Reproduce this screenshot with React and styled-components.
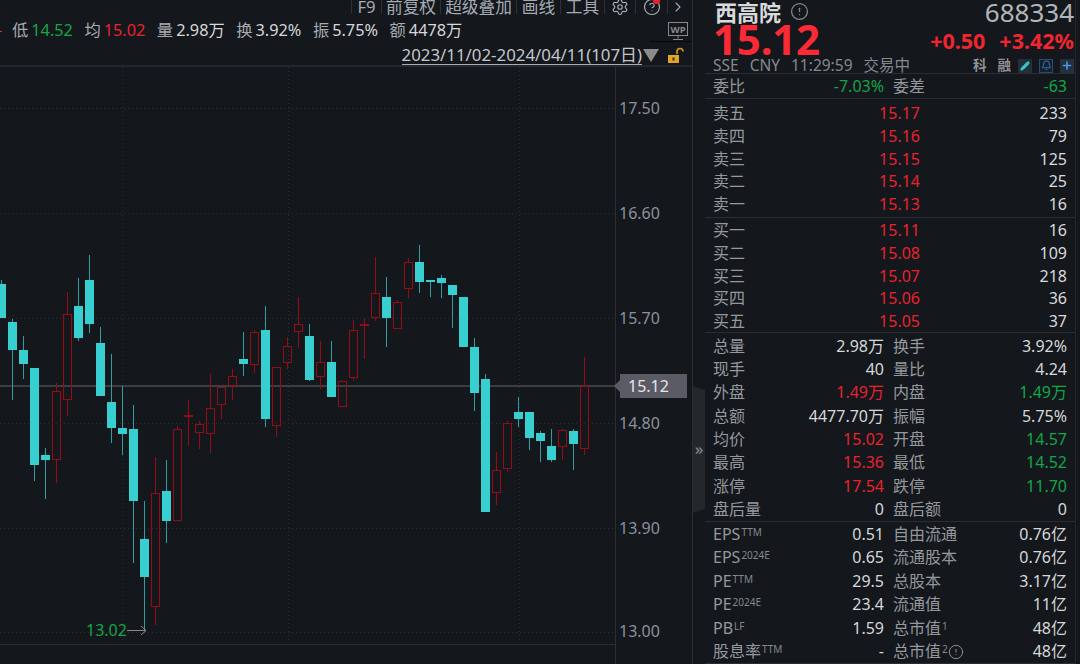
import React from 'react'
import styled, { createGlobalStyle } from 'styled-components'
import { Bell, ChevronRight, CircleAlert, CircleHelp, Pencil, Plus, Settings } from 'lucide-react'

const GlobalStyle = createGlobalStyle`
  html, body {
    margin: 0;
    padding: 0;
    background: #14171c;
  }
  body {
    font-family: "Noto Sans", "Noto Sans CJK SC", sans-serif;
    overflow: hidden;
  }
`

const RED = '#e9222e'
const GREEN = '#12a648'
const tone = (c) => (c === 'red' ? RED : c === 'green' ? GREEN : '#d5d7d9')

const Page = styled.div`
  display: flex;
  width: 1080px;
  height: 664px;
  overflow: hidden;
  background: #14171c;
`

const ChartColumn = styled.div`
  display: flex;
  flex-direction: column;
  width: 692px;
  flex: none;
  border-right: 1px solid #2a2d32;
`

const TopBar = styled.div`
  height: 67px;
  flex: none;
  box-sizing: border-box;
  border-bottom: 2px solid #23262c;
  display: flex;
  flex-direction: column;
  align-items: flex-end;
`

const Toolbar = styled.div`
  display: flex;
  height: 14px;
  align-items: center;
  padding-right: 4px;
`

const ToolItem = styled.div`
  display: flex;
  align-items: center;
  justify-content: center;
  width: ${(p) => p.$w}px;
  height: 14px;
  border-left: 1px solid #2c2f34;
  color: #a4abb3;
  font-size: 16.7px;
  line-height: 14px;
  position: relative;
  box-sizing: border-box;
`

const RedDot = styled.span`
  position: absolute;
  top: -3px;
  right: 7px;
  width: 7px;
  height: 7px;
  border-radius: 50%;
  background: #e9222e;
`

const StatsRow = styled.div`
  align-self: stretch;
  display: flex;
  align-items: center;
  height: 31px;
  padding-left: 12px;
  gap: 11.5px;
  position: relative;
`

const ClippedMark = styled.span`
  position: absolute;
  left: 0;
  top: 17px;
  width: 2px;
  height: 1px;
  background: #e9222e;
`

const Stat = styled.div`
  display: flex;
  align-items: center;
  gap: 3px;
  font-size: 16.3px;
  line-height: 22px;
  color: #a8acb1;
  white-space: nowrap;
`

const StatValue = styled.span`
  color: ${(p) => tone(p.$c)};
`

const WpBadge = styled.div`
  position: absolute;
  right: 0;
  top: 8px;
  height: 20px;
  width: 42px;
  box-sizing: border-box;
  padding-right: 4px;
  border-bottom: 1px solid #07080a;
  display: flex;
  justify-content: flex-end;
`

const DateRow = styled.div`
  display: flex;
  align-items: center;
  height: 20px;
  padding-right: 7px;
  gap: 1px;
`

const DateText = styled.span`
  font-size: 16.85px;
  line-height: 18px;
  color: #c3c6ca;
  border-bottom: 1px solid #a9adb2;
  white-space: nowrap;
`

const Triangle = styled.span`
  width: 0;
  height: 0;
  border-left: 8.5px solid transparent;
  border-right: 8.5px solid transparent;
  border-top: 13px solid #8c8c8c;
  margin-right: 7px;
`

const ChartArea = styled.div`
  position: relative;
  flex: 1;
  min-height: 0;
`

const ChartSvg = styled.svg`
  display: block;
  width: 691px;
  height: 597px;
`

const AxisText = styled.text`
  fill: #8a929c;
  font-size: 16px;
  font-family: "Noto Sans", sans-serif;
`

const LowText = styled.text`
  fill: ${GREEN};
  font-size: 16px;
  font-family: "Noto Sans", sans-serif;
`

const PriceTag = styled.div`
  position: absolute;
  left: 620px;
  top: 307px;
  width: 67px;
  height: 24px;
  box-sizing: border-box;
  padding-left: 8px;
  background: #5b5b66;
  color: #e4e6e8;
  font-size: 16px;
  line-height: 24px;
  &::before {
    content: '';
    position: absolute;
    left: -6px;
    top: 6px;
    border-top: 6px solid transparent;
    border-bottom: 6px solid transparent;
    border-right: 6px solid #5b5b66;
  }
`

const CollapseHandle = styled.div`
  position: absolute;
  left: 693px;
  top: 386px;
  width: 12px;
  height: 127px;
  background: #24272c;
  clip-path: polygon(0 0, 100% 4px, 100% 123px, 0 100%);
  color: #8d9196;
  font-size: 17px;
  line-height: 125px;
  text-align: center;
`

const Side = styled.div`
  flex: 1;
  min-width: 0;
  box-sizing: border-box;
  padding-left: 12px;
  padding-right: 4px;
  display: flex;
  flex-direction: column;
`

const SideInner = styled.div`
  border-right: 1px solid #24272c;
  height: 664px;
`

const Header = styled.div`
  height: 74px;
  box-sizing: border-box;
  padding: 0 1px 0 8px;
  border-bottom: 1px solid #2a2d32;
`

const HeadRow = styled.div`
  display: flex;
  align-items: center;
  justify-content: space-between;
  height: ${(p) => p.$h}px;
`

const Title = styled.div`
  display: flex;
  align-items: center;
  gap: 9px;
  padding-left: 2px;
  color: #d9dadb;
  font-size: 22px;
  font-weight: 700;
  line-height: 22px;
`

const Code = styled.div`
  color: #b3b6b9;
  font-size: 26px;
  line-height: 24px;
`

const BigPrice = styled.div`
  color: #fa2a36;
  font-size: 42px;
  font-weight: 700;
  line-height: 30px;
  letter-spacing: -0.2px;
  padding-bottom: 3px;
`

const Changes = styled.div`
  display: flex;
  gap: 14px;
  color: #f0262f;
  font-size: 21.5px;
  font-weight: 700;
  line-height: 26px;
`

const SubInfo = styled.div`
  display: flex;
  gap: 11px;
  color: #848a90;
  font-size: 15.5px;
  line-height: 15px;
  white-space: nowrap;
`

const Badges = styled.div`
  display: flex;
  align-items: center;
  gap: 7px;
  color: #8f9398;
  font-size: 13.5px;
  line-height: 15px;
  font-weight: 700;
`

const BadgeLabel = styled.span`
  margin-right: ${(p) => p.$gap || 0}px;
`

const BadgeBox = styled.span`
  display: flex;
  align-items: center;
  justify-content: center;
  width: 14px;
  height: 14px;
  background: ${(p) => p.$bg};
  border: 1px solid ${(p) => p.$line};
  box-sizing: border-box;
  color: ${(p) => p.$fg};
`

const Section = styled.div`
  box-sizing: border-box;
  height: ${(p) => p.$h}px;
  padding: ${(p) => p.$pad || 0}px 8px 0;
  border-bottom: 1px solid #2a2d32;
`

const PairRow = styled.div`
  display: grid;
  grid-template-columns: 171px 174px;
  column-gap: 9px;
  height: ${(p) => p.$h}px;
  line-height: ${(p) => p.$h}px;
  font-size: 16px;
`

const Cell = styled.div`
  display: flex;
  justify-content: space-between;
  white-space: nowrap;
`

const Label = styled.span`
  display: flex;
  align-items: center;
  color: #94999e;
`

const Value = styled.span`
  color: ${(p) => tone(p.$c)};
`

const Small = styled.sup`
  font-size: 10px;
  line-height: 10px;
  color: #84898e;
  align-self: flex-start;
  margin: 4px 0 0 1px;
  vertical-align: baseline;
`

const QuoteRow = styled.div`
  display: grid;
  grid-template-columns: 60px 147px 1fr;
  height: 22.75px;
  line-height: 22.75px;
  font-size: 16px;
`

const QuotePrice = styled.span`
  color: ${RED};
  text-align: right;
`

const QuoteVol = styled.span`
  color: #d8dadc;
  text-align: right;
`

const sells = [
  ['卖五', '15.17', '233'],
  ['卖四', '15.16', '79'],
  ['卖三', '15.15', '125'],
  ['卖二', '15.14', '25'],
  ['卖一', '15.13', '16'],
]

const buys = [
  ['买一', '15.11', '16'],
  ['买二', '15.08', '109'],
  ['买三', '15.07', '218'],
  ['买四', '15.06', '36'],
  ['买五', '15.05', '37'],
]

const stats = [
  ['总量', '2.98万', '', '换手', '3.92%', ''],
  ['现手', '40', '', '量比', '4.24', ''],
  ['外盘', '1.49万', 'red', '内盘', '1.49万', 'green'],
  ['总额', '4477.70万', '', '振幅', '5.75%', ''],
  ['均价', '15.02', 'red', '开盘', '14.57', 'green'],
  ['最高', '15.36', 'red', '最低', '14.52', 'green'],
  ['涨停', '17.54', 'red', '跌停', '11.70', 'green'],
  ['盘后量', '0', '', '盘后额', '0', ''],
]

const funda = [
  ['EPS', 'TTM', '0.51', '自由流通', '', '0.76亿'],
  ['EPS', '2024E', '0.65', '流通股本', '', '0.76亿'],
  ['PE', 'TTM', '29.5', '总股本', '', '3.17亿'],
  ['PE', '2024E', '23.4', '流通值', '', '11亿'],
  ['PB', 'LF', '1.59', '总市值', '1', '48亿'],
  ['股息率', 'TTM', '-', '总市值', '2', '48亿'],
]

const topStats = [
  ['低', '14.52', 'green'],
  ['均', '15.02', 'red'],
  ['量', '2.98万', ''],
  ['换', '3.92%', ''],
  ['振', '5.75%', ''],
  ['额', '4478万', ''],
]

// [up, wickTop, bodyTop, bodyBottom, wickBottom]
const candles = [
  [0, 280, 284, 318, 318], [0, 319, 322, 350, 400], [0, 336, 350, 364, 379], [0, 368, 368, 465, 481],
  [0, 448, 455, 460, 499], [1, 383, 391, 460, 483], [1, 292, 314, 400, 416], [0, 278, 306, 338, 341],
  [0, 255, 280, 324, 333], [0, 327, 343, 396, 396], [0, 354, 402, 428, 443], [0, 386, 428, 434, 455],
  [0, 405, 429, 501, 563], [0, 501, 539, 577, 630], [1, 457, 493, 607, 625], [0, 460, 491, 521, 543],
  [1, 426, 429, 521, 521], [1, 400, 415, 416, 446], [1, 421, 424, 433, 449], [1, 374, 408, 434, 453],
  [1, 387, 387, 405, 419], [1, 369, 376, 386, 400], [0, 332, 359, 364, 376], [1, 330, 332, 365, 373],
  [0, 306, 330, 419, 427], [1, 367, 367, 426, 437], [1, 337, 346, 363, 369], [1, 297, 324, 332, 348],
  [0, 324, 336, 380, 381], [1, 341, 362, 377, 389], [0, 341, 362, 397, 397], [1, 380, 381, 407, 407],
  [1, 320, 330, 378, 381], [1, 319, 324, 325, 359], [1, 257, 293, 318, 321], [0, 277, 297, 318, 347],
  [1, 300, 302, 329, 329], [1, 258, 262, 289, 298], [0, 245, 262, 282, 293], [0, 280, 280, 282, 297],
  [0, 275, 278, 283, 298], [0, 285, 285, 295, 328], [0, 297, 297, 347, 347], [0, 338, 347, 393, 411],
  [0, 374, 379, 512, 512], [1, 452, 470, 493, 505], [1, 421, 423, 469, 472], [0, 397, 412, 419, 427],
  [0, 412, 412, 438, 450], [0, 431, 433, 441, 462], [0, 429, 446, 460, 462], [1, 429, 430, 447, 460],
  [0, 429, 431, 444, 470], [1, 357, 386, 449, 455],
]

const gridRows = [108, 213, 318, 423, 528, 632]
const gridCols = [122, 288, 519]
const axisLabels = [[17.5, 108], [16.6, 213], [15.7, 318], [14.8, 423], [13.9, 528], [13.0, 631]]

function Candle({ data, index }) {
  const [up, wickTop, bodyTop, bodyBottom, wickBottom] = data
  const x = 1.5 + index * 11
  if (up) {
    return (
      <g stroke="#960c14" fill="none" shapeRendering="crispEdges">
        <line x1={x} x2={x} y1={wickTop} y2={bodyTop} />
        <line x1={x} x2={x} y1={bodyBottom} y2={wickBottom} />
        <rect x={x - 4} y={bodyTop + 0.5} width={8} height={Math.max(bodyBottom - bodyTop - 1, 0.5)} />
      </g>
    )
  }
  return (
    <g shapeRendering="crispEdges">
      <line x1={x} x2={x} y1={wickTop} y2={wickBottom} stroke="#2b9fa2" />
      <rect x={x - 4.5} y={bodyTop} width={9} height={bodyBottom - bodyTop} fill="#38cfd1" />
    </g>
  )
}

function Chart() {
  return (
    <ChartSvg viewBox="0 67 691 597">
      {gridRows.map((y) => (
        <line key={y} x1={0} x2={615} y1={y + 0.5} y2={y + 0.5} stroke="#2b2e33" strokeDasharray="1 3" />
      ))}
      {gridCols.map((x) => (
        <line key={x} x1={x + 0.5} x2={x + 0.5} y1={67} y2={640} stroke="#2b2e33" strokeDasharray="1 3" />
      ))}
      <line x1={0} x2={615} y1={386} y2={386} stroke="#3b3d40" strokeWidth="2" />
      <line x1={0} x2={615} y1={644.5} y2={644.5} stroke="#2b2e33" />
      <line x1={615.5} x2={615.5} y1={67} y2={664} stroke="#2b2e33" />
      {candles.map((c, i) => (
        <Candle key={i} data={c} index={i} />
      ))}
      {axisLabels.map(([v, y]) => (
        <AxisText key={v} x={619} y={y + 6}>{v.toFixed(2)}</AxisText>
      ))}
      <LowText x={86} y={636}>13.02</LowText>
      <path d="M127 630.5H146M141 626l5 4.5-5 4.5" stroke="#8a8a8a" fill="none" />
    </ChartSvg>
  )
}

function WpIcon() {
  return (
    <svg width="20" height="18" viewBox="0 0 20 18">
      <rect x="0.5" y="0.5" width="19" height="13" fill="none" stroke="#85888c" />
      <text x="10" y="11" textAnchor="middle" fontSize="9.5" fontWeight="700" fill="#85888c" fontFamily="Noto Sans">WP</text>
      <path d="M10 14v2.5M5 17.5h10" stroke="#85888c" />
    </svg>
  )
}

function LockIcon() {
  return (
    <svg width="18" height="17" viewBox="0 0 18 17">
      <path d="M10 7V4.5a3 3 0 0 1 6 0" fill="none" stroke="#d9971e" strokeWidth="1.6" />
      <rect x="1" y="8" width="11" height="8" fill="#e3a526" />
      <rect x="5.5" y="10.5" width="2" height="3" fill="#3a2a08" />
    </svg>
  )
}

export default function App() {
  return (
    <Page>
      <GlobalStyle />
      <ChartColumn>
        <TopBar>
          <Toolbar>
            <ToolItem $w={30}>F9</ToolItem>
            <ToolItem $w={59}>前复权</ToolItem>
            <ToolItem $w={76}>超级叠加</ToolItem>
            <ToolItem $w={44}>画线</ToolItem>
            <ToolItem $w={44}>工具</ToolItem>
            <ToolItem $w={31}><Settings size={18} strokeWidth={1.6} /></ToolItem>
            <ToolItem $w={32}><CircleHelp size={18} strokeWidth={1.6} /><RedDot /></ToolItem>
            <ToolItem $w={21}><ChevronRight size={16} strokeWidth={1.6} /></ToolItem>
          </Toolbar>
          <StatsRow>
            <ClippedMark />
            {topStats.map(([k, v, c]) => (
              <Stat key={k}>{k}<StatValue $c={c}>{v}</StatValue></Stat>
            ))}
            <WpBadge><WpIcon /></WpBadge>
          </StatsRow>
          <DateRow>
            <DateText>2023/11/02-2024/04/11(107日)</DateText>
            <Triangle />
            <LockIcon />
          </DateRow>
        </TopBar>
        <ChartArea>
          <Chart />
          <PriceTag>15.12</PriceTag>
        </ChartArea>
      </ChartColumn>
      <CollapseHandle>»</CollapseHandle>
      <Side>
        <SideInner>
          <Header>
            <HeadRow $h={23}>
              <Title>西高院<CircleAlert size={19} strokeWidth={1.6} color="#85898e" /></Title>
              <Code>688334</Code>
            </HeadRow>
            <HeadRow $h={35}>
              <BigPrice>15.12</BigPrice>
              <Changes><span>+0.50</span><span>+3.42%</span></Changes>
            </HeadRow>
            <HeadRow $h={15}>
              <SubInfo><span>SSE</span><span>CNY</span><span>11:29:59</span><span>交易中</span></SubInfo>
              <Badges>
                <BadgeLabel $gap={4}>科</BadgeLabel>
                <span>融</span>
                <BadgeBox $bg="#22303a" $line="#22303a" $fg="#3cc6c8"><Pencil size={10} strokeWidth={2.4} fill="#3cc6c8" /></BadgeBox>
                <BadgeBox $bg="#15202e" $line="#2a4a72" $fg="#3f78c0"><Bell size={11} strokeWidth={2} /></BadgeBox>
                <BadgeBox $bg="#22303f" $line="#22303f" $fg="#4a9be8"><Plus size={13} strokeWidth={3.2} /></BadgeBox>
              </Badges>
            </HeadRow>
          </Header>
          <Section $h={25}>
            <PairRow $h={25}>
              <Cell><Label>委比</Label><Value $c="green">-7.03%</Value></Cell>
              <Cell><Label>委差</Label><Value $c="green">-63</Value></Cell>
            </PairRow>
          </Section>
          <Section $h={119} $pad={3}>
            {sells.map(([k, p, v]) => (
              <QuoteRow key={k}><Label>{k}</Label><QuotePrice>{p}</QuotePrice><QuoteVol>{v}</QuoteVol></QuoteRow>
            ))}
          </Section>
          <Section $h={115} $pad={1}>
            {buys.map(([k, p, v]) => (
              <QuoteRow key={k}><Label>{k}</Label><QuotePrice>{p}</QuotePrice><QuoteVol>{v}</QuoteVol></QuoteRow>
            ))}
          </Section>
          <Section $h={189} $pad={1.5}>
            {stats.map(([a, b, bc, c, d, dc]) => (
              <PairRow key={a} $h={23.4}>
                <Cell><Label>{a}</Label><Value $c={bc}>{b}</Value></Cell>
                <Cell><Label>{c}</Label><Value $c={dc}>{d}</Value></Cell>
              </PairRow>
            ))}
          </Section>
          <Section $h={142} $pad={0.5}>
            {funda.map(([a, sup, b, c, sup2, d], i) => (
              <PairRow key={i} $h={23.5}>
                <Cell><Label>{a}<Small>{sup}</Small></Label><Value>{b}</Value></Cell>
                <Cell>
                  <Label>
                    {c}{sup2 && <Small>{sup2}</Small>}
                    {sup2 === '2' && <CircleAlert size={16} strokeWidth={1.5} color="#8a8f94" />}
                  </Label>
                  <Value>{d}</Value>
                </Cell>
              </PairRow>
            ))}
          </Section>
        </SideInner>
      </Side>
    </Page>
  )
}
